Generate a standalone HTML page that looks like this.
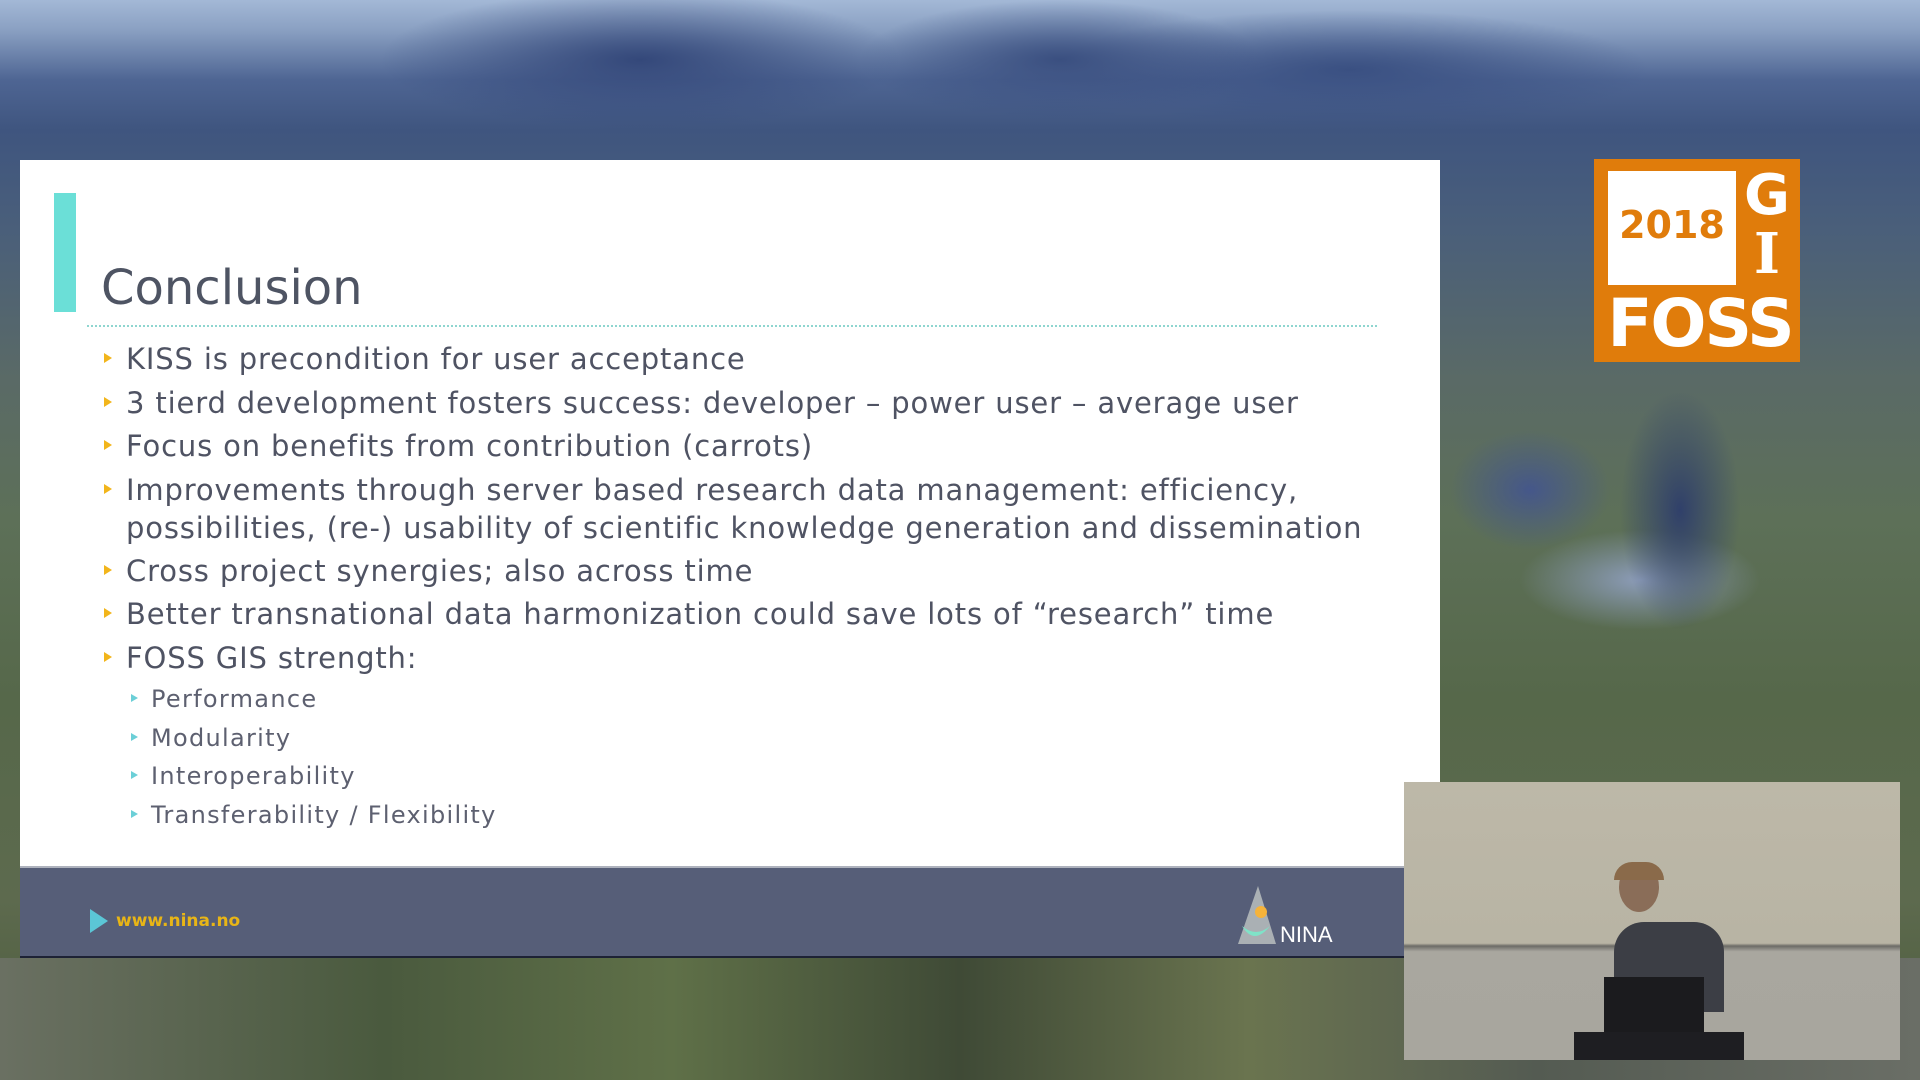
<!DOCTYPE html>
<html><head><meta charset="utf-8"><style>
*{margin:0;padding:0;box-sizing:border-box}
body{width:1920px;height:1080px;overflow:hidden;position:relative;font-family:"DejaVu Sans","Liberation Sans",sans-serif;
background:linear-gradient(180deg,#a3b8d6 0px,#8aa0c2 30px,#4e6593 80px,#3f557f 130px,#4a5f7a 230px,#5a6a66 380px,#5d7058 520px,#56684a 700px,#5d6a4e 900px,#4a5a3a 1080px);}
.bg1{position:absolute;left:0;top:0;width:1920px;height:170px;background:radial-gradient(ellipse 260px 70px at 640px 60px,#34487a 0,rgba(52,72,122,0) 100%),radial-gradient(ellipse 200px 60px at 1060px 60px,#3a4f80 0,rgba(58,79,128,0) 100%),radial-gradient(ellipse 300px 60px at 1350px 70px,#3a5082 0,rgba(58,80,130,0) 100%);}
.bg2{position:absolute;left:1440px;top:360px;width:480px;height:420px;background:radial-gradient(ellipse 60px 120px at 240px 150px,#30406a 0,rgba(48,64,106,0) 100%),radial-gradient(ellipse 80px 60px at 90px 130px,#45578a 0,rgba(69,87,138,0) 100%),radial-gradient(ellipse 120px 50px at 200px 220px,#8c9cb8 0,rgba(140,156,184,0) 100%);}
.bg3{position:absolute;left:0;top:958px;width:1920px;height:122px;background:linear-gradient(90deg,#6a7062,#4a5a3e 20%,#5f7048 35%,#3f4a36 50%,#6a744f 65%,#545b52 80%,#6a6e66);}
.slide{position:absolute;left:20px;top:160px;width:1420px;height:706px;background:#fff}
.bar{position:absolute;left:54px;top:193px;width:22px;height:119px;background:#6bdfd7}
.title{position:absolute;left:101px;top:264px;font-size:48px;color:#4e5463;line-height:1}
.dots{position:absolute;left:87px;top:325px;width:1290px;border-top:2px dotted #8fd6d0}
.li{position:absolute;left:126px;font-size:29px;letter-spacing:0.85px;color:#4f5363;white-space:nowrap;line-height:1}
.li:before{content:"";position:absolute;left:-22px;top:8px;border-left:8px solid #f2b51b;border-top:5px solid transparent;border-bottom:5px solid transparent}
.sub{position:absolute;left:151px;font-size:24px;color:#5d6070;white-space:nowrap;line-height:1;letter-spacing:1.3px}
.sub:before{content:"";position:absolute;left:-20px;top:7px;border-left:7px solid #6bcfd7;border-top:4px solid transparent;border-bottom:4px solid transparent}
.footer{position:absolute;left:20px;top:866px;width:1420px;height:92px;background:#565e78;border-top:2px solid #aeb2bd;border-bottom:2px solid #1d2235}
.logo{position:absolute;left:1594px;top:159px;width:206px;height:203px;background:#e07c0b}
.cam{position:absolute;left:1404px;top:782px;width:496px;height:278px;background:linear-gradient(180deg,#bdb8a8 0,#b8b4a4 58%,#6c6b66 59%,#a9a79f 61%,#a8a69e 100%)}
</style></head><body>
<div class="bg1"></div><div class="bg2"></div><div class="bg3"></div>
<div class="slide"></div>
<div class="bar"></div>
<div class="title">Conclusion</div>
<div class="dots"></div>
<div class="li" style="top:345px">KISS is precondition for user acceptance</div>
<div class="li" style="top:389px">3 tierd development fosters success: developer – power user – average user</div>
<div class="li" style="top:432px">Focus on benefits from contribution (carrots)</div>
<div class="li" style="top:476px">Improvements through server based research data management: efficiency,<br><span style="display:block;margin-top:9px">possibilities, (re-) usability of scientific knowledge generation and dissemination</span></div>
<div class="li" style="top:557px">Cross project synergies; also across time</div>
<div class="li" style="top:600px">Better transnational data harmonization could save lots of “research” time</div>
<div class="li" style="top:644px">FOSS GIS strength:</div>
<div class="sub" style="top:687px">Performance</div>
<div class="sub" style="top:726px">Modularity</div>
<div class="sub" style="top:764px">Interoperability</div>
<div class="sub" style="top:803px">Transferability / Flexibility</div>
<div class="footer">
<div style="position:absolute;left:70px;top:41px;border-left:18px solid #5bc6d6;border-top:12px solid transparent;border-bottom:12px solid transparent"></div>
<div style="position:absolute;left:96px;top:43px;font-size:17px;font-weight:bold;color:#e8b516">www.nina.no</div>
<svg style="position:absolute;left:1204px;top:16px" width="115" height="62" viewBox="0 0 115 62">
<polygon points="34,2 14,60 52,60" fill="#aab0b4"/>
<path d="M18,42 Q30,62 46,42 Q32,54 18,42Z" fill="#7fe3c8"/>
<circle cx="37" cy="28" r="6" fill="#f6b33a"/>
<text x="56" y="58" font-family="Liberation Sans Narrow,Liberation Sans,sans-serif" font-size="22" fill="#fff">NINA</text>
</svg>
</div>
<div class="logo">
<div style="position:absolute;left:14px;top:12px;width:128px;height:114px;background:#fff"></div>
<div style="position:absolute;left:14px;top:44px;width:128px;text-align:center;font:bold 38px 'DejaVu Sans',sans-serif;color:#e07c0b">2018</div>
<div style="position:absolute;left:148px;top:4px;width:50px;text-align:center;font:bold 56px 'DejaVu Sans',sans-serif;color:#fff">G</div>
<div style="position:absolute;left:148px;top:62px;width:50px;text-align:center;font:bold 56px 'DejaVu Serif',serif;color:#fff">I</div>
<div style="position:absolute;left:8px;top:126px;width:196px;text-align:center;font:bold 66px 'DejaVu Sans',sans-serif;color:#fff;letter-spacing:-2px">FOSS</div>
</div>
<div class="cam">
<div style="position:absolute;left:215px;top:80px;width:40px;height:50px;border-radius:50%;background:#8a6d58"></div>
<div style="position:absolute;left:210px;top:80px;width:50px;height:18px;border-radius:20px 20px 0 0;background:#8a6a4a"></div>
<div style="position:absolute;left:210px;top:140px;width:110px;height:90px;border-radius:30px 30px 0 0;background:#3c3e45"></div>
<div style="position:absolute;left:200px;top:195px;width:100px;height:55px;background:#1b1b1e"></div>
<div style="position:absolute;left:170px;top:250px;width:170px;height:28px;background:#1e1e22"></div>
</div>
</body></html>
